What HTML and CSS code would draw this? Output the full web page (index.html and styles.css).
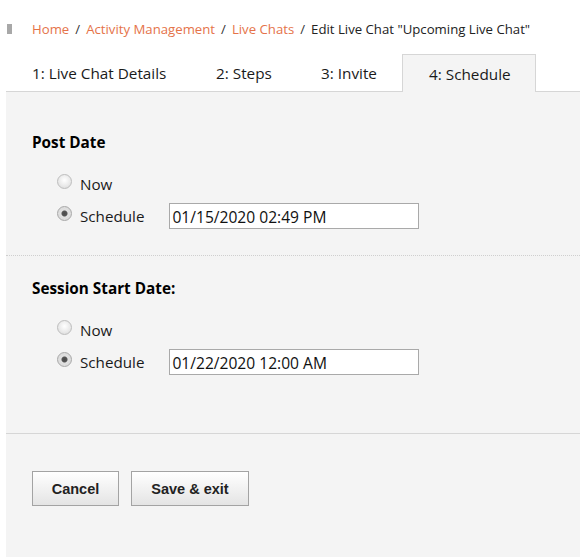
FILE: index.html
```html
<!DOCTYPE html>
<html>
<head>
<meta charset="utf-8">
<link rel="stylesheet" href="styles.css">
</head>
<body>
<div class="page">
  <nav class="breadcrumb">
    <span class="marker"></span>
    <a class="crumb">Home</a><span class="sep">/</span>
    <a class="crumb">Activity Management</a><span class="sep">/</span>
    <a class="crumb">Live Chats</a><span class="sep">/</span>
    <span class="current">Edit Live Chat "Upcoming Live Chat"</span>
  </nav>
  <div class="tabs">
    <div class="tab t1">1: Live Chat Details</div>
    <div class="tab t2">2: Steps</div>
    <div class="tab t3">3: Invite</div>
    <div class="tab t4 active">4: Schedule</div>
  </div>
  <div class="panel">
    <section class="section first">
      <h3 class="label">Post Date</h3>
      <div class="option">
        <span class="radio"></span><span class="opt-text">Now</span>
      </div>
      <div class="option">
        <span class="radio checked"></span><span class="opt-text">Schedule</span>
        <div class="field">01/15/2020 02:49 PM</div>
      </div>
    </section>
    <section class="section second">
      <h3 class="label">Session Start Date:</h3>
      <div class="option">
        <span class="radio"></span><span class="opt-text">Now</span>
      </div>
      <div class="option">
        <span class="radio checked"></span><span class="opt-text">Schedule</span>
        <div class="field">01/22/2020 12:00 AM</div>
      </div>
    </section>
    <div class="actions">
      <button class="btn btn-cancel">Cancel</button>
      <button class="btn btn-save">Save &amp; exit</button>
    </div>
  </div>
</div>
</body>
</html>
```
FILE: styles.css
```css
html, body {
  margin: 0;
  padding: 0;
  background: #ffffff;
}
body {
  font-family: "Open Sans", "Noto Sans", sans-serif;
  color: #1a1a1a;
  width: 580px;
  height: 557px;
  overflow: hidden;
}
.page {
  display: flex;
  flex-direction: column;
  height: 557px;
}
.breadcrumb {
  display: flex;
  align-items: center;
  height: 20px;
  margin-top: 19px;
  padding-left: 7px;
  font-size: 13.2px;
}
.marker {
  width: 5px;
  height: 10px;
  background: #a8a8a8;
  margin-right: 20px;
}
.crumb {
  color: #e57349;
}
.sep {
  color: #333;
  margin: 0 6px;
}
.current {
  color: #222;
}
.tabs {
  display: flex;
  margin-top: 15px;
  margin-left: 6px;
  height: 37px;
  border-bottom: 1px solid #d6d6d6;
  font-size: 15.3px;
  color: #1a1a1a;
}
.tab {
  display: flex;
  align-items: center;
  height: 37px;
  box-sizing: border-box;
  padding-top: 1px;
}
.t1 { padding-left: 26px; width: 184px; }
.t2 { width: 105px; padding-left: 26px; }
.t3 { width: 107px; padding-left: 26px; }
.t4 {
  width: 134px;
  padding-left: 26px;
}
.active {
  background: #f4f4f4;
  border: 1px solid #d6d6d6;
  border-bottom: none;
  height: 38px;
  margin-bottom: -1px;
  padding-top: 1px;
}
.panel {
  flex: 1;
  margin-left: 6px;
  background: #f4f4f4;
}
.section {
  padding-left: 26px;
  box-sizing: border-box;
}
.first {
  padding-top: 39px;
  height: 164px;
  border-bottom: 1px dotted #cfcfcf;
}
.second {
  padding-top: 21px;
  height: 178px;
  border-bottom: 1px solid #d6d6d6;
}
.label {
  margin: 0;
  font-size: 15.3px;
  font-weight: bold;
  line-height: 22px;
  color: #000;
}
.option {
  display: flex;
  align-items: center;
  height: 26px;
  margin-left: 25px;
}
.first .option:nth-of-type(1), .second .option:nth-of-type(1) {
  margin-top: 18px;
}
.option + .option {
  margin-top: 6px;
}
.radio {
  width: 13px;
  height: 13px;
  border-radius: 50%;
  border: 1px solid #bdbdbd;
  background: radial-gradient(circle at 50% 40%, #ffffff 0%, #e8e8e8 60%, #d4d4d4 100%);
  box-sizing: content-box;
  position: relative;
  top: -3px;
}
.checked {
  background: radial-gradient(circle, #4a4a4a 0, #555 2.5px, #e0e0e0 3.5px, #d8d8d8 100%);
  border-color: #a8a8a8;
}
.opt-text {
  margin-left: 8px;
  font-size: 15.2px;
  color: #1a1a1a;
}
.field {
  margin-left: 25px;
  width: 250px;
  height: 26px;
  box-sizing: border-box;
  border: 1px solid #a9a9a9;
  background: #fff;
  font-size: 15.6px;
  line-height: 24px;
  padding-left: 2px;
  padding-top: 1px;
  color: #111;
}
.actions {
  display: flex;
  gap: 12px;
  padding-left: 26px;
  padding-top: 37px;
}
.btn {
  height: 35px;
  border: 1px solid #a3a3a3;
  border-radius: 0;
  background: linear-gradient(#ffffff, #e4e4e4);
  font-family: "Liberation Sans", Arial, sans-serif;
  font-weight: bold;
  font-size: 14.5px;
  color: #222;
  padding: 0;
}
.btn-cancel { width: 87px; }
.btn-save { width: 118px; }
```
